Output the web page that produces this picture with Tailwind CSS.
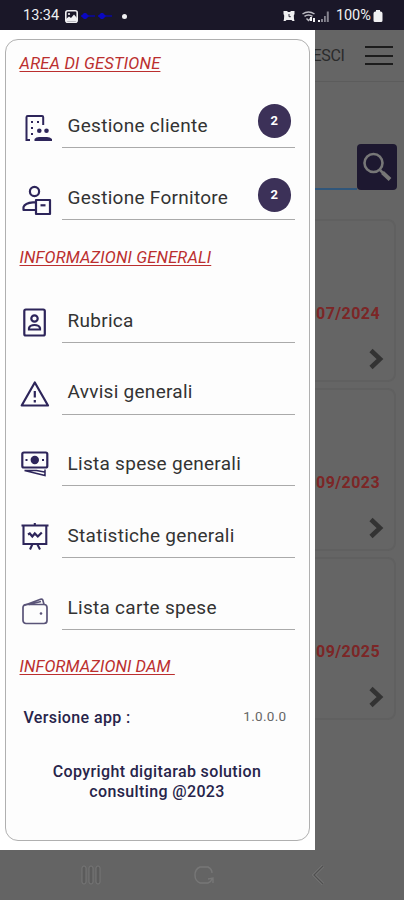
<!DOCTYPE html>
<html lang="it">
<head>
<meta charset="utf-8">
<title>Menu</title>
<script src="https://cdn.jsdelivr.net/npm/@tailwindcss/browser@4"></script>
</head>
<body class="w-[404px] h-[900px] overflow-hidden bg-[#656565] font-[Roboto,sans-serif] flex flex-col whitespace-nowrap">
<!-- status bar -->
<header class="h-[30px] shrink-0 bg-[#1a1728] text-[#f0f0f2] flex items-center pl-[23px] pr-[21px] pt-[2px] text-[14.5px]">
  <span class="w-[37px]">13:34</span>
  <svg class="ml-[5px]" width="13" height="13" viewBox="0 0 13 13"><rect x=".8" y=".8" width="11.4" height="11.4" rx="2" fill="#1a1728" stroke="#f0f0f2" stroke-width="1.6"/><path d="M1 11.5V9l3-2.500 2 1.500 3-3.500L12 8v3.500z" fill="#f0f0f2"/><circle cx="4" cy="4" r="1.100" fill="#f0f0f2"/></svg>
  <svg class="ml-[3px]" width="34" height="8" viewBox="0 0 34 8"><path d="M0 4h32" stroke="#0a08a0" stroke-width="1.500" stroke-dasharray="14 3"/><path d="M0 4l3-3h2l3 3-3 3H3zM17 4l3-3h2l3 3-3 3h-2z" fill="#0a08c0"/></svg>
  <i class="ml-[7px] size-[5px] rounded-full bg-[#f0f0f2]"></i>
  <span class="flex-1"></span>
  <svg width="12" height="12" viewBox="0 0 12 12"><path d="M.5 1H4l1 1h2l1-1h3.500v3l-.7 1.500.2 3.500.5 2H9.500l-1-1h-5l-1 1H.5l.5-2 .2-3.500L.5 4z" fill="#f0f0f2"/><path d="M6 4V6.700h1.800" fill="none" stroke="#1a1728" stroke-width=".9"/></svg>
  <svg class="ml-[7px]" width="28" height="13" viewBox="0 0 28 13"><g fill="none" stroke="#bdbcc4" stroke-width="1.500"><path d="M.5 4Q6.500 0 12.500 4M2.500 6.300Q6.500 3.500 10.500 6.300M4.500 8.500l2 2 2-2"/></g><path d="M8 7h2v4H8zM11 8h2v4h-2zM16 10h2v2h-2z" fill="#f0f0f2"/><path d="M19 12V9h2v3zM22 12V6h1.800v6zM24.800 12V1.500h2V12z" fill="#85838e"/></svg>
  <span class="ml-[6px] w-[36px] tracking-[-0.1px]">100%</span>
  <svg class="ml-px" width="10" height="12" viewBox="0 0 10 12" fill="#f0f0f2"><path d="M3 0h4v1.500h1Q9.500 2 9.500 3.500v7Q9.500 12 8 12H2Q.5 12 .5 10.500v-7Q.5 2 2 1.500h1z"/></svg>
</header>

<main class="h-[820px] shrink-0 flex">
  <!-- drawer -->
  <nav class="w-[314.500px] shrink-0 bg-white pt-[9px] pl-[4.500px] pr-[5px]">
    <div class="h-[802px] w-[305px] border-[1.500px] border-[#b0b0b0] rounded-[13px] bg-[#fdfdfd] pl-[14px] text-[#333]">
      <h2 class="h-[36px] pt-[14px] leading-[20px] text-[16.500px] italic text-[#bb2f2f] underline underline-offset-[2px] decoration-1"><span class="tracking-[0.2px]">AREA DI GESTIONE</span></h2>

      <div class="h-[72px] flex">
        <div class="w-[42px] pt-[38px] pl-[4px]"><svg width="28" height="28" viewBox="0 0 28 28"><path d="M6 26H2.500V3.200Q2.500 2 3.700 2H18Q19.200 2 19.200 3.200V11" fill="none" stroke="#2d255a" stroke-width="2"/><path d="M7 7h2v2H7zM13 7h2v2h-2zM7 13h2v2H7zM7 19h2v2H7z" fill="#2d255a"/><circle cx="15.300" cy="16.800" r="2.300" fill="#2d255a"/><circle cx="22.500" cy="16.800" r="2.300" fill="#2d255a"/><path d="M10.500 27v-2Q12 23 15 23h8q3 0 5 2v2z" fill="#2d255a"/></svg></div>
        <div class="w-[233px] border-b border-[#aaa] flex justify-between"><span class="pt-[38px] pl-[6px] leading-[24px] text-[19px] tracking-[0.28px]">Gestione cliente</span><b class="mt-[28px] mr-[3.500px] size-[33.500px] rounded-full bg-[#3c3158] text-white text-[13px] grid place-items-center">2</b></div>
      </div>
      <div class="h-[72px] flex">
        <div class="w-[42px] pt-[37px] pl-[2px]"><svg width="32" height="32" viewBox="0 0 32 32" fill="none" stroke="#2d255a" stroke-width="2.200"><circle cx="12.500" cy="6.500" r="4.600"/><path d="M14 25H1.500V22Q3 17.800 11 17.300h3M14 15h14v14H14z" stroke-linejoin="round"/><path d="M18.500 20.300h5"/></svg></div>
        <div class="w-[233px] border-b border-[#aaa] flex justify-between"><span class="pt-[38px] pl-[6px] leading-[24px] text-[19px] tracking-[0.28px]">Gestione Fornitore</span><b class="mt-[30px] mr-[3.500px] size-[33.500px] rounded-full bg-[#3c3158] text-white text-[13px] grid place-items-center">2</b></div>
      </div>

      <h2 class="h-[51px] pt-[28px] leading-[20px] text-[16.500px] italic text-[#bb2f2f] underline underline-offset-[2px] decoration-1"><span class="tracking-[0.15px]">INFORMAZIONI GENERALI</span></h2>

      <div class="h-[71.800px] flex">
        <div class="w-[42px] pt-[36px] pl-[2px]"><svg width="24" height="30" viewBox="0 0 24 30" fill="none" stroke="#2d255a" stroke-width="2.200"><rect x="2.300" y="2.500" width="20.500" height="26" rx="1.500"/><circle cx="12.500" cy="11.500" r="3.200"/><path d="M7 22.500V21Q8 18 12.500 18T18 21v1.500z"/></svg></div>
        <div class="w-[233px] border-b border-[#aaa]"><span class="block pt-[38px] pl-[6px] leading-[24px] text-[19px] tracking-[0.28px]">Rubrica</span></div>
      </div>
      <div class="h-[71.800px] flex">
        <div class="w-[42px] pt-[37px]"><svg width="30" height="28" viewBox="0 0 30 28" fill="none" stroke="#2d255a" stroke-width="2.200"><path d="M14.800 2.500L28 25.500H1.700z" stroke-linejoin="round"/><path d="M14.800 11v6.500M14.800 20v2.500"/></svg></div>
        <div class="w-[233px] border-b border-[#aaa]"><span class="block pt-[37px] pl-[6px] leading-[24px] text-[19px] tracking-[0.28px]">Avvisi generali</span></div>
      </div>
      <div class="h-[71.800px] flex">
        <div class="w-[42px] pt-[35px]"><svg width="30" height="28" viewBox="0 0 30 28" fill="none" stroke="#2d255a" stroke-width="2.200"><rect x="2.300" y="2.500" width="25" height="15" rx="1.500"/><circle cx="14.800" cy="10" r="4.200" fill="#2d255a" stroke="none"/><path d="M5.500 10h2M22 10h2"/><path d="M4.500 20.500L25 25.500V19.500M4.500 20.500h12l8 1.500" stroke-width="1.500"/></svg></div>
        <div class="w-[233px] border-b border-[#aaa]"><span class="block pt-[37px] pl-[6px] leading-[24px] text-[19px] tracking-[0.28px]">Lista spese generali</span></div>
      </div>
      <div class="h-[71.800px] flex">
        <div class="w-[42px] pt-[36px]"><svg width="30" height="30" viewBox="0 0 30 30" fill="none" stroke="#2d255a" stroke-width="2.100"><path d="M1.500 3.500h27M14.800 1v2.500M3.500 3.500V22h22.800V3.500M12.500 22l-2.500 5.500M17.200 22l2.800 5.500"/><path d="M8 12.500l1.800-1 2.500 3 2.500-3 3 3 4-4" stroke-width="2.200"/></svg></div>
        <div class="w-[233px] border-b border-[#aaa]"><span class="block pt-[38px] pl-[6px] leading-[24px] text-[19px] tracking-[0.28px]">Statistiche generali</span></div>
      </div>
      <div class="h-[71.800px] flex">
        <div class="w-[42px] pt-[38px]"><svg width="30" height="30" viewBox="0 0 30 30" fill="none" stroke="#5a5478" stroke-width="1.700"><rect x="3" y="8.500" width="24" height="19" rx="3"/><path d="M4 9.500L20.500 3.300Q22.500 2.700 23 4.700L24 8.500M9 8.500l12-3"/><circle cx="21" cy="17.500" r="1.300" fill="#5a5478" stroke="none"/></svg></div>
        <div class="w-[233px] border-b border-[#aaa]"><span class="block pt-[38px] pl-[6px] leading-[24px] text-[19px] tracking-[0.28px]">Lista carte spese</span></div>
      </div>

      <h2 class="h-[66px] pt-[27px] leading-[20px] text-[16.500px] italic text-[#bb2f2f] underline underline-offset-[2px] decoration-1"><span class="tracking-[0.1px] whitespace-pre">INFORMAZIONI DAM </span></h2>
      <div class="flex justify-between pl-[4px] pr-[22px] pt-[12px] leading-[20px]"><span class="text-[16px] font-medium text-[#27244a] tracking-[0.37px]">Versione app :</span><span class="text-[13.500px] text-[#666] -mt-[2px] tracking-[0.3px]">1.0.0.0</span></div>
      <p class="mt-[34px] pr-[14px] text-center text-[16px] leading-[20px] font-medium text-[#27244a] tracking-[0.37px]">Copyright digitarab solution<br>consulting @2023</p>
    </div>
  </nav>

  <!-- dimmed page behind the drawer -->
  <section class="flex-1 min-w-0 overflow-hidden bg-[#656565]">
    <div class="h-[52px] border-b border-[#5c5c5c] flex items-center justify-between pr-[11px]">
      <span class="text-[16px] text-[#2b2b2b] tracking-[-0.3px] -ml-[2px] pt-px">ESCI</span>
      <span class="flex flex-col gap-[6.500px]"><i class="w-[28px] h-[2px] bg-[#1c1c1c]"></i><i class="w-[28px] h-[2px] bg-[#1c1c1c]"></i><i class="w-[28px] h-[2px] bg-[#1c1c1c]"></i></span>
    </div>
    <div class="mt-[62px] h-[46px] flex">
      <div class="flex-1 border-b-2 border-[#30567a]"></div>
      <div class="w-[40px] mr-[7px] rounded-[4px] bg-[#1d1830] grid place-items-center"><svg width="30" height="30" viewBox="0 0 30 30" fill="none" stroke="#777"><circle cx="11.500" cy="11" r="9" stroke-width="2.600"/><path d="M18 18l3 3" stroke-width="2.500"/><path d="M20.500 20.500l7.500 7" stroke-width="4"/></svg></div>
    </div>
    <div class="mt-[29px] flex flex-col gap-[6px] mr-[8px] -ml-[10px] text-right text-[16px] font-bold text-[#7c2626] tracking-[0.42px]">
      <article class="h-[163px] border-2 border-[#606060] rounded-[8px] pr-[14px] pt-[82px] leading-[22px] flex flex-col items-end"><span>07/2024</span><svg class="mt-[23px] -mr-[6px]" width="18" height="22" viewBox="0 0 18 22" fill="none" stroke="#333" stroke-width="4.600"><path d="M3 2.500l9 8.500-9 8.500"/></svg></article>
      <article class="h-[163px] border-2 border-[#606060] rounded-[8px] pr-[14px] pt-[82px] leading-[22px] flex flex-col items-end"><span>09/2023</span><svg class="mt-[23px] -mr-[6px]" width="18" height="22" viewBox="0 0 18 22" fill="none" stroke="#333" stroke-width="4.600"><path d="M3 2.500l9 8.500-9 8.500"/></svg></article>
      <article class="h-[163px] border-2 border-[#606060] rounded-[8px] pr-[14px] pt-[82px] leading-[22px] flex flex-col items-end"><span>09/2025</span><svg class="mt-[23px] -mr-[6px]" width="18" height="22" viewBox="0 0 18 22" fill="none" stroke="#333" stroke-width="4.600"><path d="M3 2.500l9 8.500-9 8.500"/></svg></article>
    </div>
  </section>
</main>

<!-- system navigation -->
<footer class="flex-1 bg-[#646464] flex items-center pl-[81px] pb-px">
  <svg width="20" height="20" viewBox="0 0 20 20" fill="#5b5b5b" stroke="#777" stroke-width="1"><rect x="1" y="1" width="4" height="18" rx="2"/><rect x="8" y="1" width="4" height="18" rx="2"/><rect x="15" y="1" width="4" height="18" rx="2"/></svg>
  <svg class="ml-[93px]" width="20" height="20" viewBox="0 0 20 20" fill="none" stroke="#777" stroke-width="1.400"><path d="M6 18Q1 16 1 10T6 2h8q4 2 4 6M6 18h8q3-1 4-4M14 14l5-1v5"/></svg>
  <svg class="ml-[97px]" width="14" height="20" viewBox="0 0 14 20" fill="none"><path d="M12 1L3 10l9 9" stroke="#777" stroke-width="3"/><path d="M12 1L3 10l9 9" stroke="#505050" stroke-width="1.300"/></svg>
</footer>
</body>
</html>
